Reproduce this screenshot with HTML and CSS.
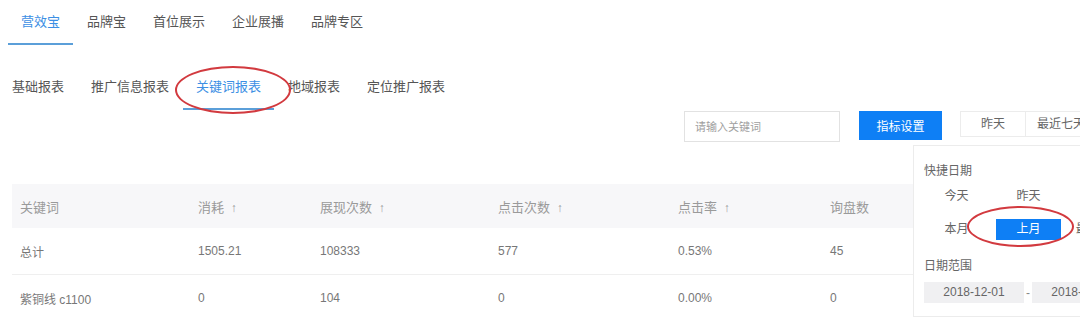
FILE: index.html
```html
<!DOCTYPE html>
<html>
<head>
  <title>关键词报表</title>
  <link rel="stylesheet" href="styles.css">
</head>
<body>
  <div class="nav">
    <a class="tab active">营效宝</a>
    <a class="tab">品牌宝</a>
    <a class="tab">首位展示</a>
    <a class="tab">企业展播</a>
    <a class="tab">品牌专区</a>
  </div>

  <div class="nav sub">
    <a class="tab">基础报表</a>
    <a class="tab">推广信息报表</a>
    <a class="tab active">关键词报表</a>
    <a class="tab">地域报表</a>
    <a class="tab">定位推广报表</a>
  </div>

  <div class="toolbar">
    <input class="search" type="text" placeholder="请输入关键词"/>
    <button class="btn-primary">指标设置</button>
    <div class="btn-group">
      <span>昨天</span>
      <span>最近七天</span>
    </div>
  </div>

  <div class="table">
    <div class="row head">
      <div>关键词</div>
      <div>消耗 <i>↑</i></div>
      <div>展现次数 <i>↑</i></div>
      <div>点击次数 <i>↑</i></div>
      <div>点击率 <i>↑</i></div>
      <div>询盘数</div>
    </div>
    <div class="row">
      <div>总计</div>
      <div>1505.21</div>
      <div>108333</div>
      <div>577</div>
      <div>0.53%</div>
      <div>45</div>
    </div>
    <div class="row">
      <div>紫铜线 c1100</div>
      <div>0</div>
      <div>104</div>
      <div>0</div>
      <div>0.00%</div>
      <div>0</div>
    </div>
  </div>

  <div class="picker">
    <div class="label">快捷日期</div>
    <div class="quick">
      <span>今天</span>
      <span>昨天</span>
      <span>前天</span>
      <span>本月</span>
      <span class="on">上月</span>
      <span>最近30天</span>
    </div>
    <div class="label">日期范围</div>
    <div class="range">
      <span class="date">2018-12-01</span>
      <span class="dash">-</span>
      <span class="date">2018-12-31</span>
    </div>
  </div>

  <div class="mark mark-tab"></div>
  <div class="mark mark-month"></div>
</body>
</html>
```

FILE: styles.css
```css
body {
  margin: 0;
  font-family: "Liberation Sans", "Noto Sans CJK SC", sans-serif;
  font-size: 12px;
  color: #777;
  background: #fff;
  width: 1080px;
  height: 320px;
  overflow: hidden;
  position: relative;
}
.nav {
  display: flex;
  gap: 1px;
  padding-left: 8px;
  height: 46px;
}
.nav.sub {
  margin-top: 19px;
  padding-left: 0;
}
.tab {
  font-size: 13px;
  color: #555;
  padding: 0 13px;
  line-height: 43px;
  height: 45px;
  box-sizing: border-box;
  border-bottom: 2px solid transparent;
}
.nav.sub .tab:first-child {
  padding-left: 12px;
}
.tab.active {
  color: #3c8fe4;
  border-bottom-color: #5b9fd9;
}
.toolbar {
  display: flex;
  align-items: flex-start;
  padding-left: 684px;
  height: 73px;
}
.search {
  flex-shrink: 0;
  width: 156px;
  height: 31px;
  box-sizing: border-box;
  border: 1px solid #e2e2e2;
  padding: 0 10px;
  font-family: inherit;
  font-size: 11px;
  outline: none;
}
.search::placeholder {
  color: #a0a0a0;
}
.btn-primary {
  flex-shrink: 0;
  margin-left: 19px;
  width: 83px;
  height: 29px;
  border: 0;
  background: #0e7ff5;
  color: #fff;
  font-family: inherit;
  font-size: 12px;
}
.btn-group {
  display: flex;
  margin-left: 18px;
  flex-shrink: 0;
}
.btn-group span {
  height: 24px;
  line-height: 24px;
  border: 1px solid #ececec;
  color: #666;
  white-space: nowrap;
}
.btn-group span:first-child {
  width: 64px;
  text-align: center;
}
.btn-group span:last-child {
  margin-left: -1px;
  padding: 0 12px 0 11px;
}
.table {
  margin-left: 12px;
  width: 1068px;
}
.row {
  display: grid;
  grid-template-columns: 178px 122px 178px 180px 152px 1fr;
  height: 46px;
  align-items: center;
  border-bottom: 1px solid #efefef;
}
.row div {
  padding-left: 8px;
  white-space: nowrap;
}
.row.head {
  height: 44px;
  background: #f7f7f9;
  border-bottom: 0;
  font-size: 13px;
  color: #9a9a9a;
}
.row.head i {
  font-style: normal;
  font-size: 12px;
  margin-left: 3px;
  color: #999;
}
.picker {
  position: absolute;
  left: 913px;
  top: 145px;
  width: 220px;
  height: 172px;
  background: #fff;
  border: 1px solid #ececec;
  padding: 17px 0 0 10px;
  box-sizing: border-box;
}
.label {
  font-size: 12px;
  color: #666;
  line-height: 16px;
}
.quick {
  display: grid;
  grid-template-columns: repeat(3, 65px);
  column-gap: 7px;
  row-gap: 12px;
  margin-top: 7px;
  margin-bottom: 18px;
}
.quick span {
  height: 21px;
  line-height: 21px;
  text-align: center;
  white-space: nowrap;
  color: #666;
}
.quick span.on {
  background: #0e7ff5;
  color: #fff;
}
.range {
  display: flex;
  align-items: center;
  margin-top: 8px;
}
.date {
  width: 100px;
  height: 21px;
  line-height: 21px;
  text-align: center;
  background: #f0f0f2;
  color: #666;
  flex-shrink: 0;
}
.dash {
  width: 12px;
  text-align: center;
  color: #888;
}
.mark {
  position: absolute;
  border: 2px solid #d23a3f;
  border-radius: 50%;
  box-sizing: border-box;
}
.mark-tab {
  left: 175px;
  top: 66px;
  width: 116px;
  height: 48px;
}
.mark-month {
  left: 967px;
  top: 206px;
  width: 107px;
  height: 41px;
}
```
